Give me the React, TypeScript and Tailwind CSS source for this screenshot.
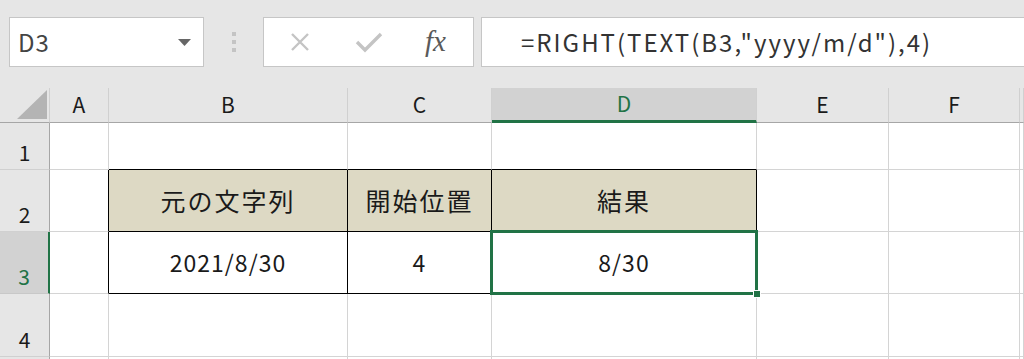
import React from "react";

const cols = ["A", "B", "C", "D", "E", "F", "G"];
const rows = [1, 2, 3, 4, 5];

const values: Record<string, string> = {
  B2: "元の文字列",
  C2: "開始位置",
  D2: "結果",
  B3: "2021/8/30",
  C3: "4",
  D3: "8/30",
};

const cellClass = (r: number, c: string) => {
  const inTable = r >= 2 && r <= 3;
  const rightBlack = inTable && ["A", "B", "C", "D"].includes(c);
  const bottomBlack = r >= 1 && r <= 3 && ["B", "C", "D"].includes(c);
  const fill = r === 2 && ["B", "C", "D"].includes(c);
  return [
    "relative flex items-center justify-center border-r border-b",
    rightBlack ? "border-r-black" : "border-r-[#d4d4d4]",
    bottomBlack ? "border-b-black" : "border-b-[#d4d4d4]",
    fill ? "bg-[#ddd9c4]" : "bg-white",
    r === 2 ? "text-[25px] tracking-[2px]" : "text-[23px] tracking-[1px]",
  ].join(" ");
};

const FormulaBar = () => (
  <div className="flex h-[88px] items-start bg-[#e6e6e6] pl-[9px] pt-[17px]">
    <div className="flex h-[50px] w-[195px] items-center justify-between border border-[#c6c6c6] bg-white pl-[8px] pr-[12px]">
      <span className="text-[24px] tracking-[1px] text-[#444]">D3</span>
      <svg width="13" height="7" viewBox="0 0 13 7">
        <path d="M0 0 L13 0 L6.5 7 Z" fill="#666" />
      </svg>
    </div>
    <div className="flex h-[50px] w-[59px] flex-col items-center justify-center gap-[4px]">
      <div className="h-[4px] w-[4px] bg-[#c4c4c4]" />
      <div className="h-[4px] w-[4px] bg-[#c4c4c4]" />
      <div className="h-[4px] w-[4px] bg-[#c4c4c4]" />
    </div>
    <div className="flex h-[50px] w-[211px] items-center border border-[#c6c6c6] bg-white pl-[25px]">
      <svg width="22" height="22" viewBox="0 0 22 22">
        <path d="M3 3 L19 19 M19 3 L3 19" stroke="#c4c4c4" strokeWidth="2.4" />
      </svg>
      <svg width="28" height="22" viewBox="0 0 28 22" className="ml-[44px]">
        <path d="M2 11 L10 19 L26 3" stroke="#c4c4c4" strokeWidth="3.4" fill="none" />
      </svg>
      <span className="ml-[42px] font-['Liberation_Serif',serif] text-[29px] italic text-[#5a5a5a]">fx</span>
    </div>
    <div className="ml-[7px] flex h-[50px] flex-1 items-center border border-r-0 border-[#c6c6c6] bg-white pl-[39px]">
      <span className="text-[24px] tracking-[2px] text-[#333]">=RIGHT(TEXT(B3,"yyyy/m/d"),4)</span>
    </div>
  </div>
);

export default function App() {
  return (
    <div className="h-[359px] w-[1024px] overflow-hidden bg-white font-['Noto_Sans_CJK_JP',sans-serif] text-[#1a1a1a]">
      <FormulaBar />
      <div className="grid grid-cols-[50px_59px_239px_144px_265px_132px_131px_1fr] grid-rows-[35px_47px_62px_62px_63px_40px]">
        <div className="flex items-end justify-end border-r border-b border-r-[#d0d0d0] border-b-[#a6a6a6] bg-[#e6e6e6] pb-[3px] pr-[2px]">
          <svg width="30" height="29" viewBox="0 0 30 29">
            <path d="M30 0 L30 29 L0 29 Z" fill="#b4b4b4" />
          </svg>
        </div>
        {cols.map((c) =>
          c === "D" ? (
            <div
              key={c}
              className="flex items-center justify-center border-r border-r-[#d0d0d0] border-b-[3px] border-b-[#217346] bg-[#d2d2d2] text-[21px] text-[#217346]"
            >
              {c}
            </div>
          ) : (
            <div
              key={c}
              className="flex items-center justify-center border-r border-b border-r-[#d0d0d0] border-b-[#a6a6a6] bg-[#e6e6e6] text-[21px]"
            >
              {c === "G" ? "" : c}
            </div>
          )
        )}
        {rows.map((r) => (
          <React.Fragment key={r}>
            {r === 3 ? (
              <div className="flex items-end justify-center border-r-2 border-b border-r-[#217346] border-b-[#c8c8c8] bg-[#d2d2d2] pb-[1px] text-[21px] text-[#217346]">
                {r}
              </div>
            ) : (
              <div className="flex items-end justify-center border-r border-b border-r-[#a6a6a6] border-b-[#d0d0d0] bg-[#e6e6e6] pb-[1px] text-[21px]">
                {r === 5 ? "" : r}
              </div>
            )}
            {cols.map((c) => (
              <div key={c + r} className={cellClass(r, c)}>
                {values[c + r]}
                {c + r === "D3" && (
                  <div className="absolute -top-[2px] -left-[2px] -right-[2px] -bottom-[2px] z-10 border-[3px] border-[#217346]">
                    <div className="absolute -right-[6px] -bottom-[6px] h-[8px] w-[8px] border border-white bg-[#217346]" />
                  </div>
                )}
              </div>
            ))}
          </React.Fragment>
        ))}
      </div>
    </div>
  );
}
